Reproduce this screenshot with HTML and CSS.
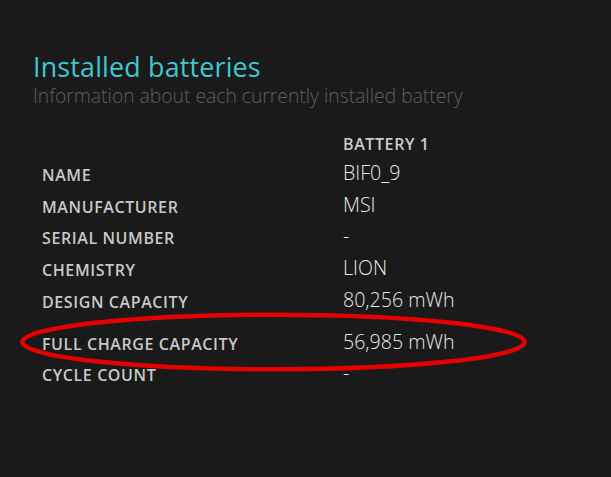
FILE: index.html
```html
<!DOCTYPE html>
<html>
<head>
<meta charset="utf-8">
<link rel="stylesheet" href="styles.css">
</head>
<body>
<div class="page">
  <h1 class="title">Installed batteries</h1>
  <p class="subtitle">Information about each currently installed battery</p>
  <div class="table-wrap">
    <table class="info">
      <thead>
        <tr><th class="label"></th><th class="head">BATTERY 1</th></tr>
      </thead>
      <tbody>
        <tr><td class="label">NAME</td><td class="value">BIF0_9</td></tr>
        <tr><td class="label">MANUFACTURER</td><td class="value">MSI</td></tr>
        <tr><td class="label">SERIAL NUMBER</td><td class="value">-</td></tr>
        <tr><td class="label">CHEMISTRY</td><td class="value">LION</td></tr>
        <tr><td class="label">DESIGN CAPACITY</td><td class="value">80,256 mWh</td></tr>
        <tr class="gap"><td class="label">FULL CHARGE CAPACITY</td><td class="value">56,985 mWh</td></tr>
        <tr><td class="label">CYCLE COUNT</td><td class="value">-</td></tr>
      </tbody>
    </table>
    <svg class="circle" width="511" height="63" viewBox="0 0 511 63">
      <ellipse cx="255.5" cy="31" rx="251" ry="27.3" fill="none" stroke="#e60000" stroke-width="4.5"/>
    </svg>
  </div>
</div>
</body>
</html>
```
FILE: styles.css
```css
html, body {
  margin: 0;
  padding: 0;
  background: #1a1a1a;
}
body {
  font-family: "Open Sans", "Noto Sans", sans-serif;
  width: 611px;
  height: 477px;
  overflow: hidden;
}
.page {
  padding: 50px 0 0 33px;
}
.title {
  margin: 0;
  font-weight: 400;
  font-size: 26.8px;
  line-height: 34px;
  color: #3fc8d2;
  letter-spacing: 0.2px;
}
.subtitle {
  margin: 0;
  font-weight: 300;
  font-size: 19.3px;
  line-height: 24px;
  color: #5e5e5e;
}
.table-wrap {
  position: relative;
  margin-top: 15px;
}
.info {
  border-collapse: collapse;
  margin-left: 9px;
}
.info th, .info td {
  padding: 0;
  text-align: left;
  white-space: nowrap;
}
.head {
  font-size: 16px;
  letter-spacing: 0.6px;
  font-weight: 600;
  color: #cccccc;
  height: 30px;
  vertical-align: bottom;
}
.label {
  width: 301px;
  font-size: 16px;
  letter-spacing: 0.6px;
  font-weight: 600;
  color: #c8c8c8;
  height: 31.6px;
  vertical-align: bottom;
}
.value {
  font-size: 19.6px;
  font-weight: 300;
  color: #e8e8e8;
  vertical-align: bottom;
}
.gap td {
  height: 42px;
}
.circle {
  position: absolute;
  left: -15px;
  top: 188px;
}
```
